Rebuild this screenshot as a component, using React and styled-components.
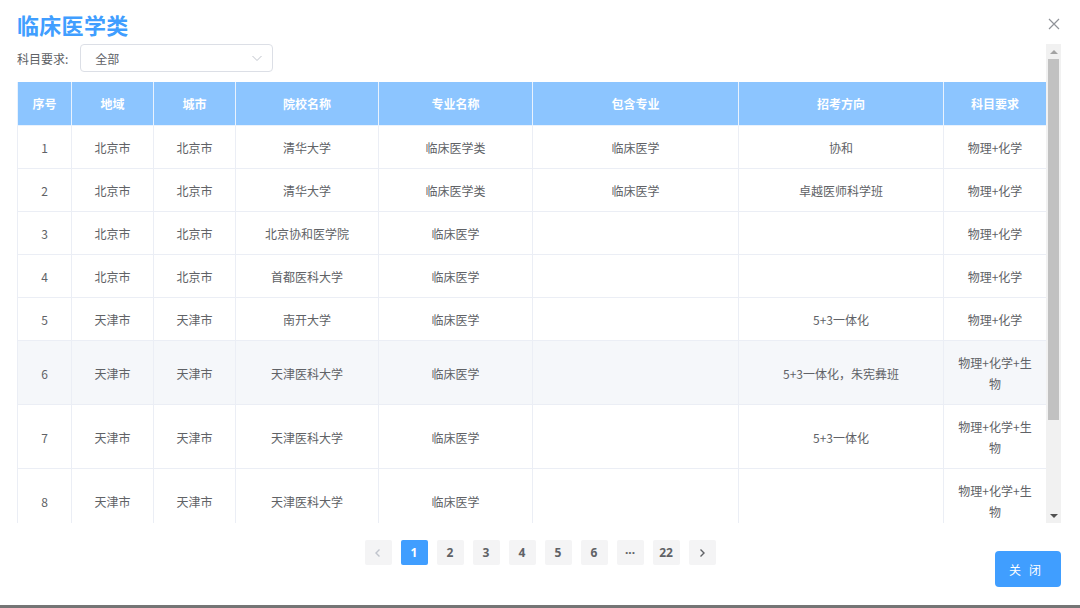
import React from 'react';
import styled, {createGlobalStyle} from 'styled-components';

const GlobalStyle = createGlobalStyle`
    html, body {
        margin: 0;
        padding: 0;
        background: #fff;
    }
    body {
        font-family: "Noto Sans CJK SC", "Noto Sans", sans-serif;
        color: #606266;
    }
`;

const Dialog = styled.div`
    width: 1080px;
    height: 608px;
    display: flex;
    flex-direction: column;
    background: #fff;
    overflow: hidden;
`;

const Header = styled.div`
    height: 44px;
    box-sizing: border-box;
    padding: 3px 19px 0 17px;
    display: flex;
    align-items: center;
    justify-content: space-between;
`;

const Title = styled.h1`
    margin: 0;
    font-size: 22px;
    font-weight: 700;
    color: #409eff;
    letter-spacing: 0.3px;
`;

const CloseIcon = styled.button`
    border: none;
    background: transparent;
    padding: 0;
    width: 14px;
    height: 14px;
    display: flex;
    cursor: pointer;
`;

const Body = styled.div`
    margin-left: 17px;
    width: 1044px;
    height: 479px;
    display: flex;
`;

const Content = styled.div`
    width: 1029px;
    height: 100%;
    overflow: hidden;
`;

const ScrollBar = styled.div`
    width: 15px;
    height: 100%;
    background: #f1f1f1;
    display: flex;
    flex-direction: column;
    align-items: center;
`;

const ScrollArrow = styled.div`
    height: 15px;
    width: 15px;
    display: flex;
    align-items: center;
    justify-content: center;

    &::before {
        content: '';
        width: 0;
        height: 0;
        border-left: 4px solid transparent;
        border-right: 4px solid transparent;
        ${p => (p.$down
            ? 'border-top: 4px solid #505050;'
            : 'border-bottom: 4px solid #a3a3a3;')}
    }
`;

const Thumb = styled.div`
    width: 11px;
    height: 361px;
    background: #c1c1c1;
`;

const Filter = styled.div`
    height: 28px;
    display: flex;
    align-items: center;
    margin-bottom: 10px;
    font-size: 12px;
`;

const FilterLabel = styled.label`
    color: #606266;
    margin-right: 12px;
`;

const Select = styled.div`
    width: 193px;
    height: 28px;
    box-sizing: border-box;
    border: 1px solid #dcdfe6;
    border-radius: 4px;
    padding: 0 9px 0 14px;
    display: flex;
    align-items: center;
    justify-content: space-between;
    color: #606266;
`;

const Table = styled.table`
    width: 1029px;
    border-collapse: collapse;
    table-layout: fixed;
    font-size: 12px;
`;

const Th = styled.th`
    height: 43px;
    padding: 0 10px;
    background: #8cc5ff;
    color: #fff;
    font-weight: 700;
    border: 1px solid #e9f2fd;
    border-top: none;
    text-align: center;
`;

const Tr = styled.tr`
    background: ${p => (p.$hover ? '#f5f7fa' : '#fff')};
`;

const Td = styled.td`
    padding: 11px 10px 10px;
    line-height: 21px;
    border: 1px solid #ebeef5;
    text-align: center;
    color: #606266;
    vertical-align: middle;
`;

const Wrap = styled.div`
    width: 82px;
    margin: 0 auto;
    word-break: break-all;
`;

const Footer = styled.div`
    flex: 1;
    display: grid;
    grid-template-columns: 1fr auto 1fr;
    padding: 0 19px;
`;

const Pager = styled.div`
    grid-column: 2;
    display: flex;
    gap: 9px;
    margin-top: 17px;
    align-self: start;
`;

const PageBtn = styled.button`
    width: 27px;
    height: 25px;
    padding: 0;
    border: none;
    border-radius: 2px;
    background: ${p => (p.$active ? '#409eff' : '#f4f4f5')};
    color: ${p => (p.$active ? '#fff' : p.$disabled ? '#c0c4cc' : '#606266')};
    font-family: "Noto Sans", "Noto Sans CJK SC", sans-serif;
    font-size: 12px;
    font-weight: 700;
    display: flex;
    align-items: center;
    justify-content: center;
    cursor: pointer;
`;

const CloseButton = styled.button`
    grid-column: 3;
    justify-self: end;
    align-self: start;
    margin-top: 28px;
    width: 66px;
    height: 36px;
    border: none;
    border-radius: 4px;
    background: #409eff;
    color: #fff;
    font-family: "Noto Sans CJK SC", sans-serif;
    font-size: 12px;
    letter-spacing: 8px;
    padding-left: 8px;
    cursor: pointer;
`;

const BottomBar = styled.div`
    height: 3px;
    background: #757575;
`;

const columns = [
    {title: '序号', width: 54},
    {title: '地域', width: 82},
    {title: '城市', width: 82},
    {title: '院校名称', width: 143},
    {title: '专业名称', width: 154},
    {title: '包含专业', width: 206},
    {title: '招考方向', width: 205},
    {title: '科目要求', width: 103},
];

const rows = [
    ['1', '北京市', '北京市', '清华大学', '临床医学类', '临床医学', '协和', '物理+化学'],
    ['2', '北京市', '北京市', '清华大学', '临床医学类', '临床医学', '卓越医师科学班', '物理+化学'],
    ['3', '北京市', '北京市', '北京协和医学院', '临床医学', '', '', '物理+化学'],
    ['4', '北京市', '北京市', '首都医科大学', '临床医学', '', '', '物理+化学'],
    ['5', '天津市', '天津市', '南开大学', '临床医学', '', '5+3一体化', '物理+化学'],
    ['6', '天津市', '天津市', '天津医科大学', '临床医学', '', '5+3一体化，朱宪彝班', '物理+化学+生物'],
    ['7', '天津市', '天津市', '天津医科大学', '临床医学', '', '5+3一体化', '物理+化学+生物'],
    ['8', '天津市', '天津市', '天津医科大学', '临床医学', '', '', '物理+化学+生物'],
    ['9', '河北省', '石家庄市', '河北医科大学', '临床医学', '', '', '物理+化学'],
    ['10', '河北省', '石家庄市', '河北医科大学', '临床医学', '', '5+3一体化', '物理+化学+生物'],
];

const Chevron = ({dir, color}) => (
    <svg width="10" height="10" viewBox="0 0 10 10">
        <path d={dir === 'left' ? 'M6.5 1.5 L3 5 L6.5 8.5' : 'M3.5 1.5 L7 5 L3.5 8.5'}
              fill="none" stroke={color} strokeWidth="1.4" />
    </svg>
);

const App = () => {
    return (
        <Dialog>
            <GlobalStyle />
            <Header>
                <Title>临床医学类</Title>
                <CloseIcon aria-label="close">
                    <svg width="14" height="14" viewBox="0 0 14 14">
                        <path d="M2 2 L12 12 M12 2 L2 12" stroke="#909399" strokeWidth="1.2" />
                    </svg>
                </CloseIcon>
            </Header>
            <Body>
                <Content>
                    <Filter>
                        <FilterLabel>科目要求:</FilterLabel>
                        <Select>
                            <span>全部</span>
                            <svg width="12" height="12" viewBox="0 0 12 12">
                                <path d="M1.5 4 L6 8.5 L10.5 4" fill="none" stroke="#c0c4cc" strokeWidth="1" />
                            </svg>
                        </Select>
                    </Filter>
                    <Table>
                        <colgroup>
                            {columns.map(c => <col key={c.title} style={{width: c.width}} />)}
                        </colgroup>
                        <thead>
                            <tr>
                                {columns.map(c => <Th key={c.title}>{c.title}</Th>)}
                            </tr>
                        </thead>
                        <tbody>
                            {rows.map(r => (
                                <Tr key={r[0]} $hover={r[0] === '6'}>
                                    {r.map((v, i) => (
                                        <Td key={i}>{i === 7 ? <Wrap>{v}</Wrap> : v}</Td>
                                    ))}
                                </Tr>
                            ))}
                        </tbody>
                    </Table>
                </Content>
                <ScrollBar>
                    <ScrollArrow />
                    <Thumb />
                    <div style={{flex: 1}} />
                    <ScrollArrow $down />
                </ScrollBar>
            </Body>
            <Footer>
                <Pager>
                    <PageBtn $disabled><Chevron dir="left" color="#c0c4cc" /></PageBtn>
                    <PageBtn $active>1</PageBtn>
                    <PageBtn>2</PageBtn>
                    <PageBtn>3</PageBtn>
                    <PageBtn>4</PageBtn>
                    <PageBtn>5</PageBtn>
                    <PageBtn>6</PageBtn>
                    <PageBtn>···</PageBtn>
                    <PageBtn>22</PageBtn>
                    <PageBtn><Chevron dir="right" color="#606266" /></PageBtn>
                </Pager>
                <CloseButton>关闭</CloseButton>
            </Footer>
            <BottomBar />
        </Dialog>
    );
};

export default App;
